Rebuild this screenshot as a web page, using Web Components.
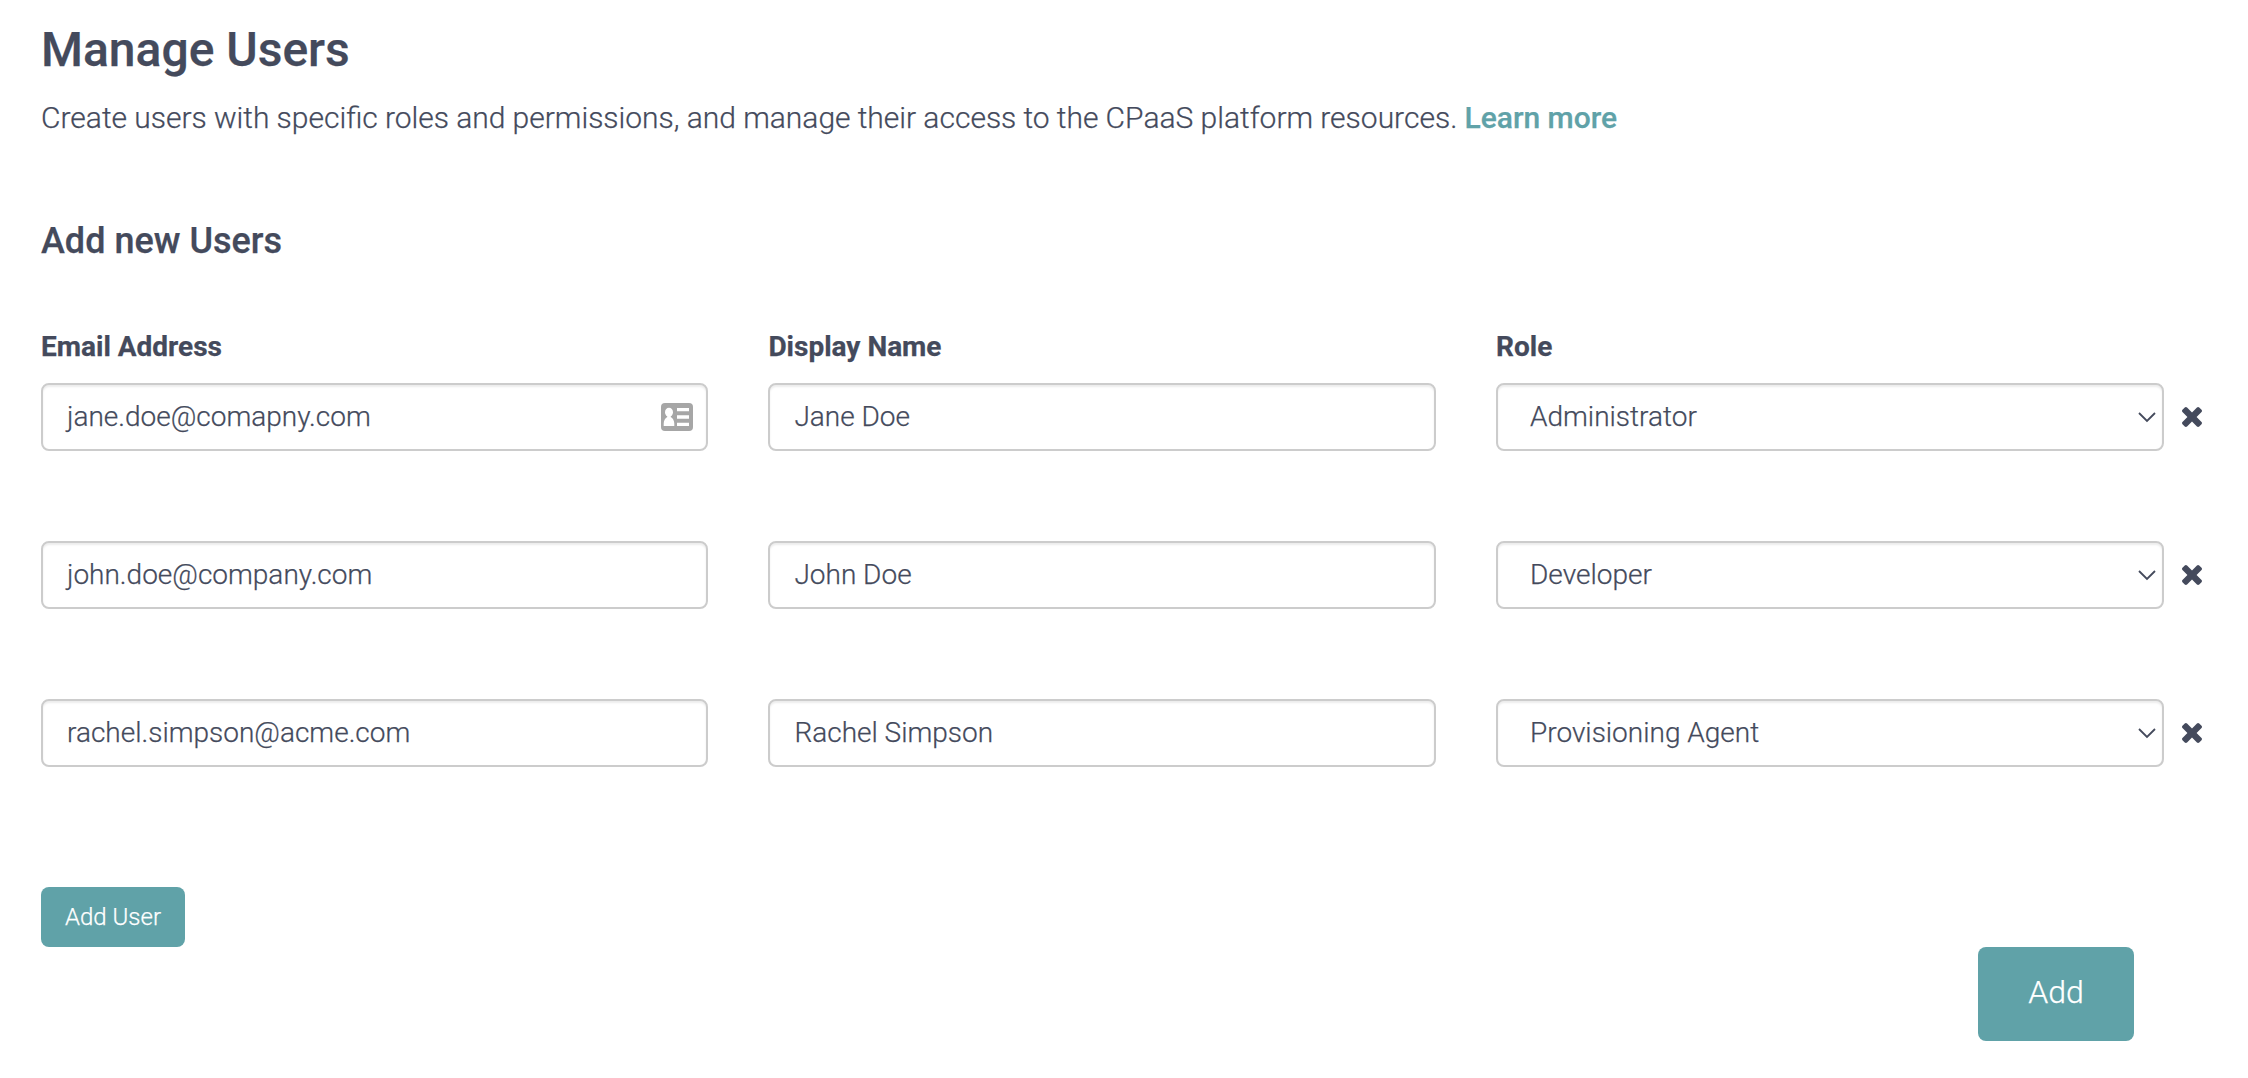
<!DOCTYPE html>
<html lang="en">
<head>
<meta charset="utf-8">
<title>Manage Users</title>
<style>
  body { margin: 0; background: #fff; color: #444a5c; font-family: Roboto, "Liberation Sans", sans-serif; font-weight: 300; -webkit-text-stroke: 0.25px; }
</style>
</head>
<body>
<manage-users-page></manage-users-page>

<template id="page-tpl">
  <style>
    :host { display: flex; flex-direction: column; box-sizing: border-box; height: 1078px; padding: 18px 41px 0; }
    h1 { margin: 0; font-size: 48px; line-height: 64px; font-weight: 500; }
    p { margin: 18px 0 0; font-size: 30px; line-height: 36px; white-space: nowrap; word-spacing: -0.15px; }
    a { color: #60a2a8; font-weight: 500; text-decoration: none; }
    h2 { margin: 83px 0 0; font-size: 36px; line-height: 44px; font-weight: 500; }
    .rows { display: flex; flex-direction: column; gap: 90px; margin-top: 66px; }
    .actions { display: flex; flex-direction: column; margin-top: 120px; }
    .submit { display: flex; justify-content: flex-end; padding-right: 73px; }
  </style>
  <h1>Manage Users</h1>
  <p>Create users with specific roles and permissions, and manage their access to the CPaaS platform resources. <a href="#">Learn more</a></p>
  <h2>Add new Users</h2>
  <div class="rows">
    <user-row labels email="jane.doe@comapny.com" name="Jane Doe" role-name="Administrator" contact></user-row>
    <user-row email="john.doe@company.com" name="John Doe" role-name="Developer"></user-row>
    <user-row email="rachel.simpson@acme.com" name="Rachel Simpson" role-name="Provisioning Agent"></user-row>
  </div>
  <div class="actions">
    <teal-button>Add User</teal-button>
    <div class="submit"><teal-button large>Add</teal-button></div>
  </div>
</template>

<template id="row-tpl">
  <style>
    :host { display: grid; grid-template-columns: 667.4px 667.6px 668px 20px; column-gap: 60px; align-items: end; }
    button { all: unset; display: flex; align-items: center; height: 68px; margin-left: -42px; width: 20px; }
    svg { width: 20px; height: 20px; fill: #444a5c; }
  </style>
  <form-field class="email"></form-field>
  <form-field class="name"></form-field>
  <form-field class="role" select></form-field>
  <button aria-label="Remove"><svg viewBox="302 366 1188 1188"><path d="M1490 1322q0 40-28 68l-136 136q-28 28-68 28t-68-28l-294-294-294 294q-28 28-68 28t-68-28l-136-136q-28-28-28-68t28-68l294-294-294-294q-28-28-28-68t28-68l136-136q28-28 68-28t68 28l294 294 294-294q28-28 68-28t68 28l136 136q28 28 28 68t-28 68l-294 294 294 294q28 28 28 68z"/></svg></button>
</template>

<template id="field-tpl">
  <style>
    :host { display: flex; flex-direction: column; }
    label { font-size: 28px; line-height: 34px; font-weight: 700; padding-top: 1px; margin-bottom: 19px; }
    label:empty { display: none; }
    .box { display: flex; align-items: center; justify-content: space-between; box-sizing: border-box; height: 68px; border: 2px solid #ccc; border-radius: 8px; padding: 0 13px 0 24px; box-shadow: inset 0 2px 2px rgba(0,0,0,.075); font-size: 28px; line-height: 34px; }
    :host([select]) .box { padding: 0 6px 0 32px; }
    .value { padding-bottom: 1px; }
    svg { display: block; flex: none; }
    .card, .chevron { display: none; }
    :host([contact]) .card, :host([select]) .chevron { display: block; }
  </style>
  <label></label>
  <div class="box"><span class="value"></span>
    <svg class="card" width="32" height="28" viewBox="0 0 32 28"><rect width="32" height="28" rx="4" fill="#a6a6a6"/><g fill="#fff"><ellipse cx="8" cy="9.3" rx="4" ry="4.5"/><path d="M2.7 23v-2.500c0-3 1.600-5.300 3.600-6.500v-2h3.400v2c2 1.200 3.600 3.500 3.600 6.500V23z"/><path d="M16 5h12v3.300H16zM16 12.300h12v3.400H16zM16 19.700h12V23H16z"/></g></svg>
    <svg class="chevron" width="18" height="12" viewBox="0 0 18 12"><path d="M1 2l8 8 8-8" fill="none" stroke="#444a5c" stroke-width="1.8"/></svg>
  </div>
</template>

<template id="button-tpl">
  <style>
    :host { display: flex; }
    button { box-sizing: border-box; width: 144px; height: 60px; margin: 0; padding: 0; border: 0; border-radius: 8px; background: #60a2a8; color: #fff; font: inherit; font-size: 24px; line-height: 30px; }
    :host([large]) button { width: 156px; height: 94px; font-size: 32px; padding-bottom: 4px; }
  </style>
  <button><slot></slot></button>
</template>

<script>
  class TemplateElement extends HTMLElement {
    constructor() {
      super();
      const tpl = document.getElementById(this.constructor.template);
      this.attachShadow({ mode: 'open' }).append(document.importNode(tpl.content, true));
    }
    $(selector) { return this.shadowRoot.querySelector(selector); }
  }

  class TealButton extends TemplateElement {
    static template = 'button-tpl';
  }

  class FormField extends TemplateElement {
    static template = 'field-tpl';
    static observedAttributes = ['label', 'value'];
    attributeChangedCallback(attr, _, value) {
      this.$(attr === 'label' ? 'label' : '.value').textContent = value || '';
    }
  }

  class UserRow extends TemplateElement {
    static template = 'row-tpl';
    connectedCallback() {
      const fields = [['.email', 'email', 'Email Address'], ['.name', 'name', 'Display Name'], ['.role', 'role-name', 'Role']];
      for (const [selector, attr, label] of fields) {
        const field = this.$(selector);
        field.setAttribute('value', this.getAttribute(attr));
        if (this.hasAttribute('labels')) field.setAttribute('label', label);
      }
      this.$('.email').toggleAttribute('contact', this.hasAttribute('contact'));
    }
  }

  class ManageUsersPage extends TemplateElement {
    static template = 'page-tpl';
  }

  customElements.define('teal-button', TealButton);
  customElements.define('form-field', FormField);
  customElements.define('user-row', UserRow);
  customElements.define('manage-users-page', ManageUsersPage);
</script>
</body>
</html>
